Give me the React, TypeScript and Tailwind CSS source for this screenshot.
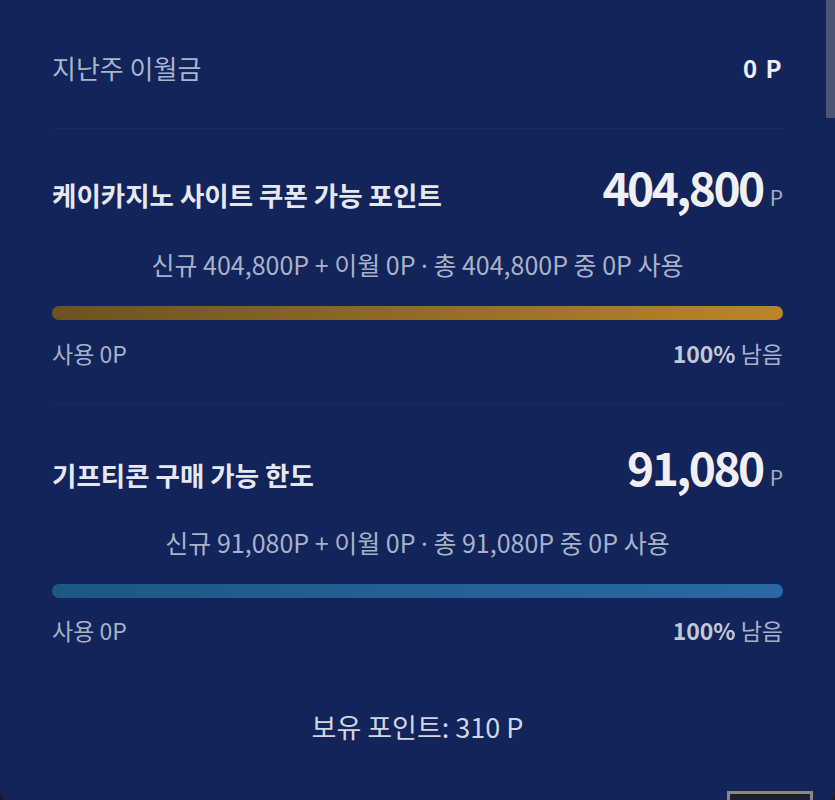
import React from "react";

interface PointSection {
  title: string;
  amount: string;
  added: string;
  total: string;
  used: string;
  barClass: string;
}

const sections: PointSection[] = [
  {
    title: "케이카지노 사이트 쿠폰 가능 포인트",
    amount: "404,800",
    added: "신규 404,800P + 이월 0P",
    total: "총 404,800P 중 0P 사용",
    used: "사용 0P",
    barClass: "bg-gradient-to-r from-[#6d5220] to-[#bb8626]",
  },
  {
    title: "기프티콘 구매 가능 한도",
    amount: "91,080",
    added: "신규 91,080P + 이월 0P",
    total: "총 91,080P 중 0P 사용",
    used: "사용 0P",
    barClass: "bg-gradient-to-r from-[#1d5883] to-[#2a68a6]",
  },
];

const font = "font-['Noto_Sans_CJK_KR','Noto_Sans',sans-serif]";

const Section: React.FC<{ s: PointSection; first: boolean }> = ({ s, first }) => (
  <div className={`flex flex-col ${first ? "pt-[34px] pb-[37px] border-b border-[#1a2b62]" : "pt-[38px]"}`}>
    <div className="flex h-[48px] items-baseline justify-between">
      <span className="text-[26.5px] font-bold text-[#e6e8ef]">{s.title}</span>
      <span className="flex items-baseline gap-[7px]">
        <span className="text-[46px] font-bold text-[#f0f0f2] tracking-[-2.5px] leading-none">{s.amount}</span>
        <span className="text-[21px] text-[#a3abc2] leading-none">P</span>
      </span>
    </div>
    <div
      className={`h-[30px] text-center text-[25px] leading-[30px] text-[#a9b2c9] ${first ? "mt-[38px]" : "mt-[36px]"}`}
    >
      {s.added} <span className="font-['Noto_Sans',sans-serif] leading-none">·</span> {s.total}
    </div>
    <div className={`h-[14px] rounded-full ${s.barClass} mt-[27px]`} />
    <div className={`flex h-[28px] items-center justify-between text-[23px] text-[#a7b0c8] ${first ? "mt-[19px]" : "mt-[18px]"}`}>
      <span>{s.used}</span>
      <span>
        <span className="font-bold text-[#c2c8d8]">100%</span> 남음
      </span>
    </div>
  </div>
);

export default function App() {
  return (
    <div className={`relative h-[800px] w-full overflow-hidden bg-[#1b1d26] ${font}`}>
      <div className="h-[804px] rounded-b-[16px] bg-[#12245a] px-[52px]">
        <div className="flex h-[129px] items-center justify-between border-b border-[#1a2b62] pt-[7px]">
          <span className="text-[26px] text-[#aab4cf]">지난주 이월금</span>
          <span className="text-[24px] font-bold text-[#eeeef2] tracking-[1.5px]">0 P</span>
        </div>
        {sections.map((s, i) => (
          <Section key={s.title} s={s} first={i === 0} />
        ))}
        <div className="mt-[67px] text-center text-[27px] leading-[32px] text-[#d2d6e2]">
          보유 포인트: 310 P
        </div>
      </div>
      {/* scrollbar thumb */}
      <div className="absolute right-0 top-0 h-[118px] w-[9px] bg-[#4c5573]" />
      {/* floating button peeking at the bottom edge */}
      <div className="absolute left-[727px] top-[791px] h-[20px] w-[86px] border-[3px] border-[#8b8884] bg-[#1c1f2d]" />
    </div>
  );
}
